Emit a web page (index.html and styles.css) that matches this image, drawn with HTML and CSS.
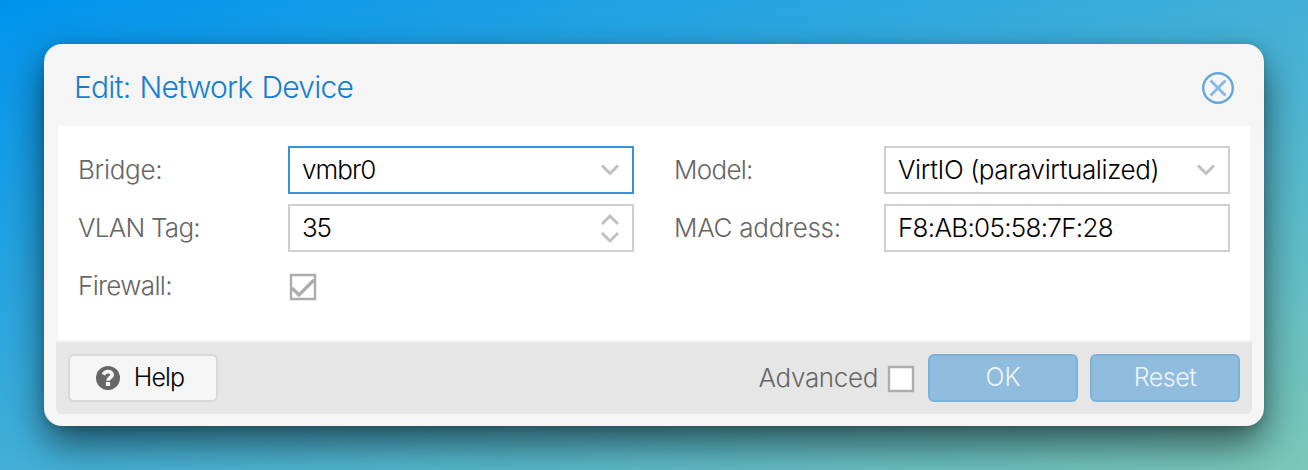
FILE: index.html
```html
<!DOCTYPE html>
<html lang="en">
<head>
<meta charset="utf-8">
<title>Edit: Network Device</title>
<link rel="stylesheet" href="styles.css">
</head>
<body>
<main class="window">
  <header class="titlebar">
    <h1 class="title">Edit: Network Device</h1>
    <svg class="close" viewBox="0 0 32 32"><circle cx="16" cy="16" r="14.8"/><path class="cross" d="M8.5 8.5l15 15M23.5 8.5l-15 15"/></svg>
  </header>
  <section class="form">
    <div class="column">
      <div class="row"><span class="label bridge">Bridge:</span><div class="field focused"><span class="vmbr">vmbr0</span><svg class="arrows" viewBox="0 0 20 32"><path d="M2 11.5l8 8 8-8"/></svg></div></div>
      <div class="row"><span class="label vlan">VLAN Tag:</span><div class="field"><span class="tag">35</span><svg class="arrows" viewBox="0 0 20 32"><path d="M2 12l8-8 8 8M2 21l8 8 8-8"/></svg></div></div>
      <div class="row"><span class="label firewall">Firewall:</span><svg class="checkbox" viewBox="0 0 28 28"><path d="M2 2h24v24H2z"/><path class="tick" d="M3 15l7 7L25 7"/></svg></div>
    </div>
    <div class="column">
      <div class="row"><span class="label model">Model:</span><div class="field"><span class="virtio">VirtIO (paravirtualized)</span><svg class="arrows" viewBox="0 0 20 32"><path d="M2 11.5l8 8 8-8"/></svg></div></div>
      <div class="row"><span class="label mac">MAC address:</span><div class="field"><span class="address">F8:AB:05:58:7F:28</span></div></div>
    </div>
  </section>
  <footer class="toolbar">
    <button class="button help"><svg class="help-icon" viewBox="0 0 24 24"><circle cx="12" cy="12" r="12"/><path class="hook" d="M7.4 8.6C8.5 6.5 10 5.7 12 5.7c2.4 0 4.1 1.3 4.1 3.2 0 3-4.1 2.8-4.1 5.9"/><path class="dot" d="M9.9 16h4.2v4H9.9z"/></svg><span class="help-text">Help</span></button>
    <span class="advanced">Advanced</span>
    <svg class="checkbox" viewBox="0 0 28 28"><path d="M2 2h24v24H2z"/></svg>
    <button class="button primary ok"><span>OK</span></button>
    <button class="button primary reset"><span>Reset</span></button>
  </footer>
</main>
</body>
</html>
```
FILE: styles.css
```css
* { box-sizing: border-box; }
body {
  margin: 0;
  height: 470px;
  padding: 44px;
  overflow: hidden;
  background: linear-gradient(to bottom right, #0093ed 0%, #42b0d8 50%, #7cc8b8 100%);
  font: 300 26px/30px Inter, "Liberation Sans", sans-serif;
  color: #000;
}
.window {
  height: 382px;
  padding: 0 12px 12px;
  border-radius: 18px;
  background: #f5f5f5;
  box-shadow: 0 18px 38px rgba(0, 0, 0, .56), 0 2px 10px rgba(0, 0, 0, .16);
}
.titlebar {
  display: flex;
  align-items: center;
  justify-content: space-between;
  height: 82px;
  padding: 5px 18px 0;
}
.title { margin: 0 0 2px; font-size: 30px; font-weight: 300; line-height: 36px; letter-spacing: -.8px; word-spacing: 1.6px; color: #157fcc; white-space: nowrap; }
.close { width: 32px; height: 32px; fill: none; stroke: #65a6d8; stroke-width: 2.4; }
.cross { stroke: #85b8e2; stroke-width: 2.8; }
.form {
  display: flex;
  gap: 40px;
  height: 214px;
  margin: 0 2px 2px;
  padding: 20px;
  background: #fff;
}
.column { display: flex; flex-direction: column; gap: 10px; width: 556px; }
.row { display: flex; align-items: center; height: 48px; }
.label { width: 210px; color: #666; white-space: nowrap; }
.bridge { letter-spacing: -.3px; }
.vlan { letter-spacing: -.75px; }
.firewall { letter-spacing: -.65px; }
.model { letter-spacing: -.7px; }
.mac { letter-spacing: -.28px; }
.vmbr { letter-spacing: -.95px; }
.tag { letter-spacing: -1.2px; }
.virtio { letter-spacing: -.4px; }
.address { letter-spacing: -.7px; }
.help-text { letter-spacing: -.9px; }
.field {
  display: flex;
  align-items: center;
  justify-content: space-between;
  width: 346px;
  height: 48px;
  padding: 0 12px;
  border: 2px solid #cfcfcf;
  white-space: nowrap;
}
.focused { border-color: #3892d4; }
.arrows { width: 20px; height: 32px; fill: none; stroke: #c0c0c0; stroke-width: 3; }
.checkbox { width: 28px; height: 28px; margin-top: 1px; fill: #fff; stroke: #acacac; stroke-width: 2.4; }
.row .checkbox { margin: 2px 0 0 1px; }
.checkbox .tick { fill: none; stroke-width: 3.2; }
.toolbar {
  display: flex;
  align-items: center;
  height: 72px;
  padding: 0 12px;
  border-radius: 0 0 6px 6px;
  background: #e6e6e6;
}
.button {
  display: flex;
  align-items: center;
  justify-content: center;
  width: 150px;
  height: 48px;
  padding: 0 0 2px;
  border: 2px solid #d8d8d8;
  border-radius: 6px;
  background: #f5f5f5;
  font: inherit;
  font-size: 25px;
  color: #000;
}
.help { gap: 14px; margin-right: auto; padding-right: 6px; }
.help-icon { width: 24px; height: 24px; margin-top: 2px; fill: #666; }
.hook { fill: none; stroke: #f5f5f5; stroke-width: 3.8; }
.dot { fill: #f5f5f5; }
.advanced { margin-right: 9px; letter-spacing: -.35px; color: #666; }
.primary { margin-left: 13px; border-color: #7bb2da; background: #90bcde; color: #f0f4f8; }
.reset { margin-left: 12px; letter-spacing: -.5px; }
```
